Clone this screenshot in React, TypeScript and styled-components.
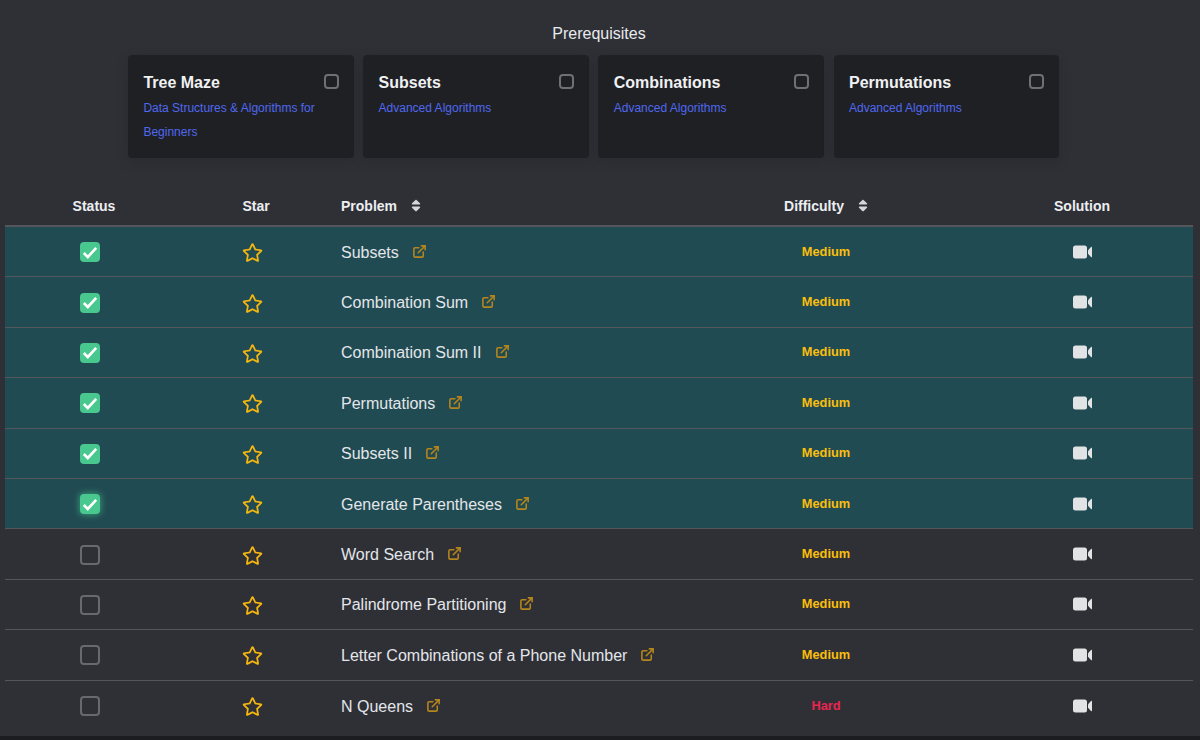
import React from "react";
import styled, { createGlobalStyle } from "styled-components";
import { FaRegStar, FaSort } from "react-icons/fa";
import { ExternalLink } from "lucide-react";

const GlobalStyle = createGlobalStyle`
    html, body {
        margin: 0;
        padding: 0;
        height: 100%;
        overflow: hidden;
        background-color: #1c1d20;
        font-family: "Liberation Sans", Arial, sans-serif;
    }
`;

const PageWrapper = styled.div`
    height: 736px;
    background-color: #2f3036;
    padding: 25px 7px 0 5px;
    box-sizing: border-box;
    color: #f2f3f5;
`;

const SectionTitle = styled.div`
    text-align: center;
    font-size: 16px;
    line-height: 18px;
    color: #e8eaed;
`;

const CardRow = styled.div`
    display: grid;
    grid-template-columns: repeat(4, 225.7px);
    column-gap: 9.5px;
    margin: 12px 0 0 123px;
`;

const Card = styled.div`
    position: relative;
    height: 103px;
    padding: 17px 16px 0 15.4px;
    box-sizing: border-box;
    background-color: #1f2024;
    border-radius: 4px;
    box-shadow: 0 4px 14px rgba(0, 0, 0, 0.12);
`;

const CardTitle = styled.div`
    font-size: 16px;
    font-weight: 700;
    line-height: 22px;
    color: #f0f1f3;
`;

const CardLink = styled.div`
    font-size: 12px;
    line-height: 24px;
    margin-top: 2px;
    color: #4f68f0;
`;

const CardCheck = styled.span`
    position: absolute;
    top: 19px;
    right: 15px;
    width: 15px;
    height: 15px;
    box-sizing: border-box;
    border: 2px solid #6f7074;
    border-radius: 4px;
`;

const COLUMNS = "178px 146px 352px 290px 222px";

const TableHeader = styled.div`
    display: grid;
    grid-template-columns: ${COLUMNS};
    height: 69px;
    padding-bottom: 1px;
    box-sizing: border-box;
    align-items: end;
    border-bottom: 2px solid #55565b;
`;

const HeaderCell = styled.div<{ $left?: boolean }>`
    display: flex;
    align-items: center;
    justify-content: ${(p) => (p.$left ? "flex-start" : "center")};
    padding-left: ${(p) => (p.$left ? "12px" : "0")};
    height: 37px;
    gap: 14px;
    font-size: 14px;
    font-weight: 700;
    color: #eceef1;
`;

const SortIcon = styled(FaSort)`
    width: 10px;
    height: 15px;
    color: #d5d6d9;
`;

const Row = styled.div<{ $done: boolean }>`
    display: grid;
    grid-template-columns: ${COLUMNS};
    height: 50.4px;
    box-sizing: border-box;
    align-items: center;
    border-bottom: 1px solid #55565b;
    background-color: ${(p) => (p.$done ? "#214b52" : "transparent")};

    &:last-child {
        border-bottom: none;
    }
`;

const Cell = styled.div`
    display: flex;
    justify-content: center;
    align-items: center;
`;

const IconCell = styled(Cell)`
    padding-right: 8px;
    padding-top: 1px;
`;

const StatusBox = styled.span<{ $done: boolean; $focus?: boolean }>`
    display: flex;
    align-items: center;
    justify-content: center;
    width: 20px;
    height: 20px;
    box-sizing: border-box;
    border-radius: 4px;
    border: ${(p) => (p.$done ? "none" : "2px solid #68696e")};
    background-color: ${(p) => (p.$done ? "#48c78e" : "transparent")};
    box-shadow: ${(p) => (p.$focus ? "0 0 6px 1px rgba(72, 199, 142, 0.6)" : "none")};
`;

const StarIcon = styled(FaRegStar)`
    width: 21px;
    height: 21px;
    margin-top: 1px;
    color: #f5b70f;
`;

const ProblemCell = styled.div`
    display: flex;
    align-items: center;
    padding: 2px 0 0 12px;
    gap: 7px;
    font-size: 16px;
    color: #e3e6ea;
`;

const LinkIcon = styled(ExternalLink)`
    width: 15px;
    height: 15px;
    margin: -3px 0 0 6px;
    color: #b5861c;
`;

const Difficulty = styled.span<{ $hard: boolean }>`
    font-size: 12.8px;
    font-weight: 700;
    margin-top: -1px;
    color: ${(p) => (p.$hard ? "#e8264f" : "#f9bf0c")};
`;

const prerequisites = [
    { title: "Tree Maze", course: "Data Structures & Algorithms for Beginners" },
    { title: "Subsets", course: "Advanced Algorithms" },
    { title: "Combinations", course: "Advanced Algorithms" },
    { title: "Permutations", course: "Advanced Algorithms" },
];

const problems = [
    { name: "Subsets", done: true },
    { name: "Combination Sum", done: true },
    { name: "Combination Sum II", done: true },
    { name: "Permutations", done: true },
    { name: "Subsets II", done: true },
    { name: "Generate Parentheses", done: true, focus: true },
    { name: "Word Search", done: false },
    { name: "Palindrome Partitioning", done: false },
    { name: "Letter Combinations of a Phone Number", done: false },
    { name: "N Queens", done: false, hard: true },
];

const CheckMark = () => (
    <svg width="16" height="13" viewBox="0 0 16 13" fill="none">
        <path d="M1.8 7 L5.8 11 L14.2 1.8" stroke="#fff" strokeWidth="2.6" />
    </svg>
);

const VideoIcon = () => (
    <svg width="19" height="14" viewBox="0 0 19 14">
        <rect x="0" y="0.5" width="14" height="13" rx="2.5" fill="#e2e3e5" />
        <path d="M15 5.2 L18.2 1.8 Q19 1.4 19 2.4 V11.6 Q19 12.6 18.2 12.2 L15 8.8 Z" fill="#e2e3e5" />
    </svg>
);

export default function App() {
    return (
        <PageWrapper>
            <GlobalStyle />
            <SectionTitle>Prerequisites</SectionTitle>
            <CardRow>
                {prerequisites.map((card) => (
                    <Card key={card.title}>
                        <CardTitle>{card.title}</CardTitle>
                        <CardLink>{card.course}</CardLink>
                        <CardCheck />
                    </Card>
                ))}
            </CardRow>
            <TableHeader>
                <HeaderCell>Status</HeaderCell>
                <HeaderCell>Star</HeaderCell>
                <HeaderCell $left>Problem <SortIcon /></HeaderCell>
                <HeaderCell>Difficulty <SortIcon /></HeaderCell>
                <HeaderCell>Solution</HeaderCell>
            </TableHeader>
            {problems.map((problem) => (
                <Row key={problem.name} $done={problem.done}>
                    <IconCell>
                        <StatusBox $done={problem.done} $focus={problem.focus}>
                            {problem.done && <CheckMark />}
                        </StatusBox>
                    </IconCell>
                    <IconCell><StarIcon /></IconCell>
                    <ProblemCell>{problem.name}<LinkIcon strokeWidth={2.5} /></ProblemCell>
                    <Cell><Difficulty $hard={!!problem.hard}>{problem.hard ? "Hard" : "Medium"}</Difficulty></Cell>
                    <Cell><VideoIcon /></Cell>
                </Row>
            ))}
        </PageWrapper>
    );
}
